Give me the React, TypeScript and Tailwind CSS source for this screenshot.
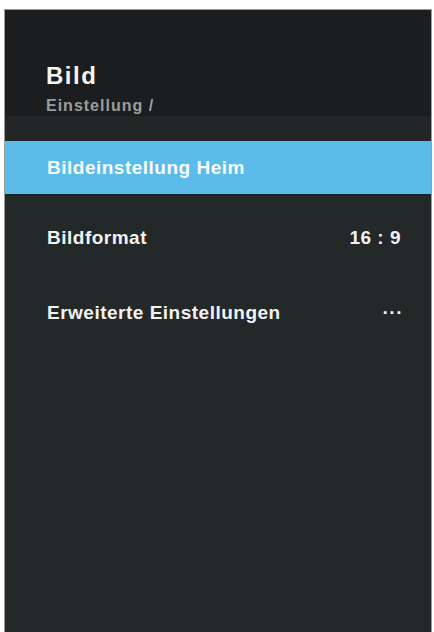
import React from "react";

const rows = [
  { label: "Bildformat", value: "16 : 9", valueClass: "mr-[30px]" },
  { label: "Erweiterte Einstellungen", value: "···", valueClass: "mr-[28px]" },
];

export default function App() {
  return (
    <div
      className="w-[434px] h-[632px] bg-white pt-[9px] pl-[4px] pr-[2px]"
      style={{ fontFamily: '"Liberation Sans", Arial, sans-serif' }}
    >
      <div className="flex flex-col h-full border-x border-t border-[#9a9c9c] bg-[#232829]">
        {/* header */}
        <div className="h-[106px] bg-[#1c1d1e] pl-[41px] pt-[54px] flex flex-col">
          <h1 className="text-[24px] leading-none font-bold text-[#f4f4f4] tracking-[1.5px]">Bild</h1>
          <p className="mt-[10px] text-[16px] leading-none font-bold text-[#9d9d9d] tracking-[1px]">
            Einstellung /
          </p>
        </div>
        <div className="h-[25px] bg-[#242526]" />

        {/* selected item */}
        <div className="h-[53px] bg-[#5bbbe9] flex items-center pl-[42px]">
          <span className="text-[19px] leading-none font-bold text-[#f7fbfd] tracking-[0.5px]">
            Bildeinstellung Heim
          </span>
        </div>
        <div className="h-[2px] bg-[#1c2124]" />

        <div className="pt-[4px] flex flex-col">
          {rows.map((row) => (
            <div key={row.label} className="h-[75px] flex items-center justify-between pl-[42px]">
              <span className="text-[19px] leading-none font-bold text-[#f2f2f2] tracking-[0.5px]">
                {row.label}
              </span>
              <span className={`text-[19px] leading-none font-bold text-[#f2f2f2] tracking-[0.5px] ${row.valueClass}`}>
                {row.value}
              </span>
            </div>
          ))}
        </div>
      </div>
    </div>
  );
}
